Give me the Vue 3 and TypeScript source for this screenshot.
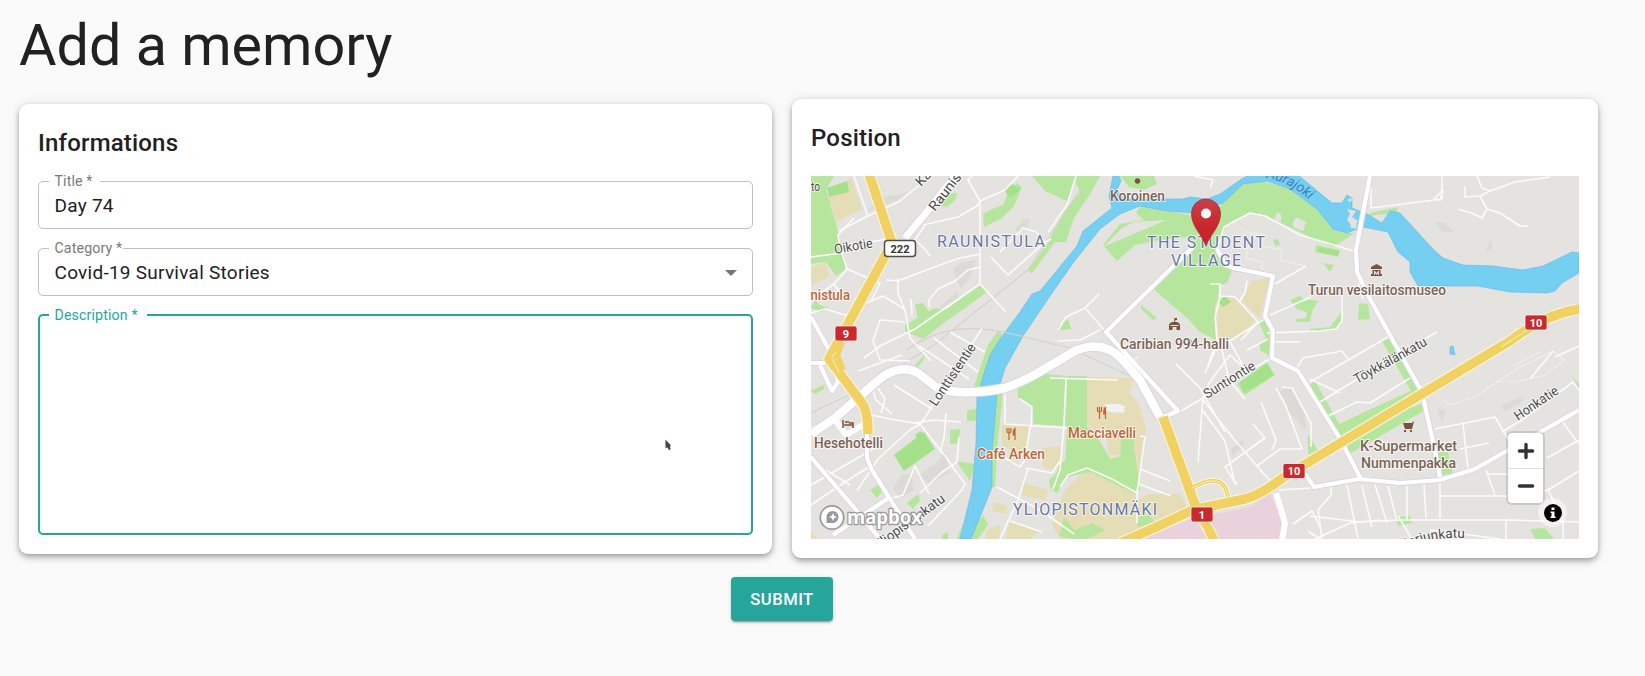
<script setup lang="ts">
import { ref } from 'vue'

interface Label {
  text: string
  x: number
  y: number
  width: number
  kind: string
  rotate?: number
}

const title = ref('Day 74')
const category = ref('Covid-19 Survival Stories')
const description = ref('')

const parks: string[] = [
  'M811 176H834L826 190L835 220L845 260V270L836 276L826 262L811 264Z',
  'M815 300L820 305L828 308L821 312L811 308Z',
  'M940 206L947 194L957 193L956 199L947 207Z',
  'M1032 176H1078L1067 201L1045 191Z',
  'M1073 176H1100L1090 194L1074 218L1066 242L1055 242L1032 273L1028 270L1048 243L1064 212L1080 192Z',
  'M983 214L990 210L1003 205L1007 195L1017 183L1022 187L1014 206L1002 218L984 227Z',
  'M1120 176H1154L1157 184L1144 190L1129 187Z',
  'M940 314L980 285L987 292L950 319H940Z',
  'M915 304L923 303L933 318L925 330L919 325Z',
  'M905 325L935 308L958 312L931 333L923 339L905 331Z',
  'M1103 247L1122 228L1134 222L1165 220L1193 226L1200 247L1151 287L1181 311L1200 332L1216 340L1215 309L1220 285L1227 283L1233 268L1226 265L1217 249L1222 232L1230 222L1248 214L1265 215L1310 237L1333 247L1355 233L1345 233L1333 229L1317 209L1290 189L1262 181L1241 185L1218 208L1196 216L1140 206L1136 213L1144 220L1120 224L1103 245L1117 261L1135 245L1160 240L1190 237L1193 247L1151 287L1195 325L1206 334L1213 220L1180 214Z',
  'M1137 298L1143 293L1146 296L1139 302Z',
  'M1141 305L1157 318L1153 320L1141 309Z',
  'M1057 327L1068 319L1071 329L1062 330Z',
  'M1370 213L1398 207L1397 213L1368 216Z',
  'M1316 245L1340 250L1338 257L1315 252Z',
  'M1273 240L1278 239L1280 244L1276 247Z',
  'M1323 263L1334 265L1330 272Z',
  'M1290 300L1300 296L1304 299L1318 301L1312 311L1310 322H1297L1296 319L1306 318L1307 312L1297 309Z',
  'M1310 329L1330 327L1341 312L1341 325L1331 331L1310 331Z',
  'M1359 303L1368 304L1370 319L1358 320Z',
  'M1258 321L1265 318L1269 329L1270 343L1269 356L1260 350L1260 343L1266 338Z',
  'M1237 384L1267 362L1275 375L1245 395Z',
  'M1382 341L1392 338L1410 371L1415 385L1421 395L1338 438L1333 427L1373 408L1411 391Z',
  'M1310 384L1315 381L1342 429L1425 403V410L1348 455L1338 438L1323 414Z',
  'M1308 434L1318 451L1308 455Z',
  'M1438 452H1448L1453 474L1440 475Z',
  'M1395 517L1410 516L1412 523L1398 526Z',
  'M1530 529L1545 528L1554 539H1535Z',
  'M1572 377L1579 384V389Z',
  'M998 331L1002 334L985 378L978 431L974 478L982 460L973 500L957 539H963L978 490L981 399L974 386L988 345Z',
  'M997 391H1003L998 440L995 487L988 487Z',
  'M967 411L978 408L976 421H967Z',
  'M950 430L960 429L959 443L950 444Z',
  'M956 461L975 464L970 481Z',
  'M811 391L825 384L824 389L815 394Z',
  'M907 503L918 494L920 501L914 507V510Z',
  'M870 490L880 484L882 492L877 498Z',
  'M942 535L948 532V539H942Z',
  'M975 526L983 515L988 525L978 539H970Z',
  'M915 365L925 354L924 359L917 368Z',
  'M1017 386L1036 373L1066 376L1067 426L1034 424L1031 407L1018 397Z',
  'M1067 376H1087V427L1094 431L1110 459L1135 452L1140 491L1130 485L1091 469L1070 475L1050 489L1049 480L1065 465L1067 427Z',
  'M1121 438H1134L1133 471L1120 466Z',
  'M1050 488L1061 462L1088 457H1110L1113 472L1138 480L1135 494L1090 472L1067 477L1057 493Z',
  'M1059 536L1064 517L1075 530L1092 523L1105 530L1087 539H1074Z',
  'M1137 517L1150 515L1154 523L1138 527Z',
]

const pitches: string[] = [
  'M827 188L847 181L849 192L829 197Z',
  'M1004 190L1012 184L1021 189L1010 198Z',
  'M894 455L924 432L935 449L904 471Z',
  'M915 435L921 431L923 434L917 438Z',
  'M1218 302L1225 296L1231 302L1223 307Z',
  'M1319 247L1339 251L1338 256L1318 252Z',
  'M1240 382L1267 364L1274 375L1243 393Z',
]

const sands: string[] = [
  'M826 199L851 177L862 209L836 222L831 204Z',
  'M811 268L825 262L830 276L812 285Z',
  'M1217 297L1234 296L1256 319L1242 337L1218 339Z',
  'M1242 301L1251 281L1270 277L1260 318Z',
  'M1002 423L1028 425V452L1017 454L1002 445Z',
  'M1043 448L1060 446L1062 470L1043 468Z',
  'M1023 483L1048 490L1045 500L1022 495Z',
  'M993 502L1008 506L1006 514L992 511Z',
  'M1050 380L1067 375L1068 391L1052 388Z',
  'M1087 377L1134 378L1129 393L1138 402L1146 430L1136 500L1149 494L1180 494L1188 510L1124 539H1060L1052 525L1065 490L1087 469L1111 478L1136 490L1137 455L1109 455L1107 440L1087 424Z',
  'M988 529L1000 525L1000 539H985Z',
  'M1010 521L1040 532L1030 539H1005Z',
  'M811 530L818 539H811Z',
]

const terrain: string[] = [
  'M867 212L882 197L907 193L896 201L878 207Z',
  'M1015 229L1023 221L1029 217L1028 227L1019 233Z',
  'M940 306L958 291V300L948 306L941 313Z',
  'M953 269L960 263L976 260L970 278L961 289L957 281Z',
  'M893 489L901 475L910 474L914 490L900 498Z',
  'M936 463L945 452L949 473L929 484L918 476Z',
  'M1276 392L1290 387L1304 409L1306 430L1291 415L1283 398Z',
  'M1435 222L1445 223L1454 232L1443 232Z',
  'M1487 247L1492 240L1492 248L1486 252Z',
  'M1500 406L1525 395L1520 404L1504 411Z',
  'M1231 449L1244 439L1242 448L1232 456Z',
  'M1438 410L1445 409L1443 422L1439 418Z',
]

const minorRoads: string[] = [
  'M811 257L842 253L860 244L887 239',
  'M854 176L868 217M854 218L838 235L840 247L847 269L880 283L871 301',
  'M839 231L870 215L900 201L930 176M847 269L834 284L811 300M834 284L845 300',
  'M811 313L825 309L845 315L853 320',
  'M923 225L958 217L977 206L980 201L968 180L972 176M980 201V284L1006 312',
  'M980 201L1005 190L1018 176M925 225L915 240L925 249L930 256',
  'M980 254L960 258L937 266L898 281L886 280M980 267L968 270L955 281L938 289L929 300V307',
  'M991 257L1008 275L1045 242L1051 239M1000 252L1023 228L1036 232L1046 244',
  'M898 278L898 293L905 310L910 338L931 361M867 303L883 296L906 310M911 299L912 315',
  'M980 284L915 329L880 346L864 358M905 322L880 320L873 341L880 360L910 361',
  'M902 355L858 371',
  'M919 346L969 379M934 338L978 372M950 332L985 352M982 328L960 363L920 425M894 385L932 409',
  'M872 415L890 419L920 424L945 456L965 484L962 490L928 526M920 424L910 430L878 459L857 491M913 423L934 420L961 422',
  'M946 413L944 438L940 452M959 437L957 462L941 473L920 493',
  'M878 388L885 399L881 413M872 388L876 400L892 414',
  'M811 461L850 485M811 485L880 445M811 505L845 482L872 465M886 500L903 495L915 466L922 480L929 494',
  'M1058 330L1066 317L1085 308L1099 294M1085 308L1107 333M1058 341L1080 340L1100 330',
  'M1194 176L1213 180L1210 188M1076 176L1067 205L1048 232',
  'M1217 249L1224 227L1250 213L1265 216L1300 235L1354 251',
  'M1210 284H1220V298L1215 317L1217 340L1208 366M1220 296L1235 297L1258 322M1247 281L1245 293L1239 302',
  'M1266 318L1233 339L1215 351L1205 373M1258 322L1241 340M1270 315L1311 297M1275 284L1306 266',
  'M1267 333L1320 331L1336 329L1342 321V295M1247 350L1268 339M1275 342H1300',
  'M1295 371L1303 358L1342 351L1348 359M1310 382L1388 337M1320 402L1388 360L1437 332M1328 416L1357 402L1370 403L1410 378',
  'M1363 299L1359 290V278M1371 188V208L1442 199V176M1434 199L1443 190L1440 201',
  'M1477 176L1482 188L1490 191L1480 196L1465 197V186M1490 191L1515 182L1550 177M1480 196L1487 209L1500 213L1520 226H1528M1487 209L1482 218L1474 214L1458 209',
  'M1229 340L1245 369L1230 355L1209 383L1203 398M1203 398L1198 462M1203 400L1237 443L1257 466L1273 484',
  'M1203 411L1225 441L1235 484M1257 466L1280 449H1302L1285 404L1276 388M1253 424L1265 438L1225 467L1237 485',
  'M1282 387L1292 388L1311 423V447M1222 350L1229 380L1245 399M1181 411L1240 376L1275 356',
  'M1137 357L1128 367M1176 364L1200 388L1225 432M1261 402L1276 440L1272 450',
  'M1140 469L1170 481M1139 484L1171 496M1140 436L1145 437L1137 493M1050 378L1118 380',
  'M1066 378L1064 425L1060 470L1053 489M1005 393V424L1067 428M1020 399L1032 407L1031 428M1030 428L1025 460L1020 467L1000 455M1026 468L1052 473L1060 461',
  'M1028 469L1018 500L1000 539M997 487L1040 510L1074 534M1010 521L1042 532M1060 487L1068 475L1087 468L1112 479L1137 493L1137 523',
  'M1340 393L1310 379M1553 351L1530 379M1555 357L1579 346',
  'M1502 432L1525 418L1573 382L1579 390M1435 429L1495 417L1508 439L1514 453M1463 424L1468 469M1460 449L1489 443',
  'M1486 470L1495 495M1487 474H1515M1440 496H1515L1548 490L1579 471M1562 421L1579 444M1547 458L1579 440M1548 490L1563 520V539',
  'M1347 485L1358 539M1362 486L1372 527M1375 485L1387 523M1388 486L1397 521M1407 486V519M1424 485L1426 518M1440 480V518',
  'M1310 516L1360 522L1400 520L1506 520L1579 522M1506 520V539M1380 520L1350 523L1315 539M1331 484V495L1318 510L1322 539M1398 516L1412 539',
  'M1293 524L1312 511L1320 527M1279 490L1310 488M1430 530L1470 535L1500 539M1308 531L1320 539',
]

const paths: string[] = [
  'M1245 238V232L1265 235L1262 246L1282 250L1280 260L1296 264L1306 266M1250 240L1246 258L1262 262V270',
  'M1443 400L1450 405L1475 397L1500 380L1520 367L1553 351L1565 360L1545 375L1515 382L1497 382M1515 365L1540 352',
]

const routes: string[] = [
  'M811 317L832 355L838 382L832 391L820 365M811 363H827M811 429L833 418L857 400',
  'M1193 247L1106 332L1116 343',
  'M1217 249L1226 265L1234 268L1273 276L1265 316L1273 331L1272 358L1298 371L1340 439L1361 479',
  'M1370 176L1356 250L1357 272L1369 297L1391 337L1422 392L1433 442L1440 477',
  'M1304 472L1314 487L1359 479L1400 483L1440 480L1475 469L1510 449L1579 410',
  'M811 457L857 511L880 539M867 430V458L872 470L915 539M890 497L833 535',
]

const labels: Label[] = [
  { text: 'to', x: 811, y: 191, width: 9, kind: 'street' },
  { text: 'Oikotie', x: 835, y: 254, width: 39, kind: 'street', rotate: -10 },
  { text: 'Ka', x: 921, y: 187, width: 16, kind: 'street', rotate: -46 },
  { text: 'Raunis', x: 935, y: 212, width: 44, kind: 'street', rotate: -52 },
  { text: 'Lonttistentie', x: 936, y: 407, width: 72, kind: 'street', rotate: -56 },
  { text: 'Suntiontie', x: 1207, y: 399, width: 58, kind: 'street', rotate: -32 },
  { text: 'Töykkälänkatu', x: 1357, y: 384, width: 81, kind: 'street', rotate: -29 },
  { text: 'Honkatie', x: 1518, y: 421, width: 50, kind: 'street', rotate: -34 },
  { text: 'Yliopistonkatu', x: 878, y: 550, width: 84, kind: 'street', rotate: -36 },
  { text: 'Raunistula', x: 788, y: 300, width: 62, kind: 'food' },
  { text: 'RAUNISTULA', x: 937, y: 246.5, width: 108, kind: 'district' },
  { text: 'THE STUDENT', x: 1147, y: 247.5, width: 118, kind: 'district' },
  { text: 'VILLAGE', x: 1171, y: 266, width: 70, kind: 'district' },
  { text: 'YLIOPISTONMÄKI', x: 1013, y: 515, width: 144, kind: 'district' },
  { text: 'Koroinen', x: 1110, y: 200.5, width: 55, kind: 'place' },
  { text: 'Caribian 994-halli', x: 1120, y: 349, width: 109, kind: 'place' },
  { text: 'Turun vesilaitosmuseo', x: 1308, y: 295, width: 138, kind: 'place' },
  { text: 'Hesehotelli', x: 814, y: 448, width: 69, kind: 'place' },
  { text: 'K-Supermarket', x: 1360, y: 451, width: 97, kind: 'place' },
  { text: 'Nummenpakka', x: 1361, y: 468, width: 95, kind: 'place' },
  { text: 'Café Arken', x: 977, y: 458.5, width: 68, kind: 'food' },
  { text: 'Macciavelli', x: 1068, y: 437.5, width: 68, kind: 'food' },
]

const shields = [
  { text: '9', x: 835, y: 326 },
  { text: '10', x: 1525, y: 315 },
  { text: '10', x: 1283, y: 463.5 },
  { text: '1', x: 1191, y: 507 },
]
</script>

<template>
  <main class="page">
    <h1>Add a memory</h1>
    <form class="form" @submit.prevent>
      <div class="cards">
        <section class="card info">
          <h2>Informations</h2>
          <fieldset class="field">
            <legend class="w-title"><span>Title *</span></legend>
            <input v-model="title" aria-label="Title" />
          </fieldset>
          <fieldset class="field">
            <legend class="w-category"><span>Category *</span></legend>
            <div class="select">
              <span>{{ category }}</span>
              <svg class="arrow" viewBox="0 0 12 6"><path d="M0 0H12L6 6Z" /></svg>
            </div>
          </fieldset>
          <fieldset class="field active">
            <legend class="w-description"><span>Description *</span></legend>
            <textarea v-model="description" aria-label="Description"></textarea>
          </fieldset>
          <svg class="cursor" viewBox="0 0 7 12"><path d="M.5 .5L6 6.5L5 7.5L5.7 10.5L3.8 11L2.6 8.5L.5 9Z" /></svg>
        </section>

        <section class="card position">
          <h2>Position</h2>
          <div class="map">
            <svg class="canvas" viewBox="811 176 768 363" width="768" height="363">
              <path v-for="d in terrain" :key="d" :d="d" class="terrain" />
              <path v-for="d in sands" :key="d" :d="d" class="sand" />
              <path v-for="d in parks" :key="d" :d="d" class="park" />
              <path v-for="d in pitches" :key="d" :d="d" class="pitch" />
              <path class="campus" d="M1133 539L1195 518L1250 507L1270 493L1281 520L1283 539Z" />
              <path class="island" d="M1293 222L1296 217L1306 222L1303 231L1293 227ZM1275 220Q1276 209 1281 214V222Z" />
              <path class="building" d="M1105 404H1118L1125 406L1124 413L1112 412L1105 411Z" />
              <path
                class="water"
                d="M960 539L972 490L976 443L977 397L982 380L990 355L1000 339L1020 312L1032 294L1040 291L1077 246L1083 231L1112 208L1109 196L1113 176H1119L1121 181L1117 190L1122 198L1137 199H1183L1190 197L1207 199L1220 194L1243 178L1250 175H1298L1332 203H1342L1347 195L1352 198V208L1367 214L1382 223L1390 211L1400 213L1433 249L1443 258L1463 265L1493 266L1523 270L1543 266L1572 252L1579 253V273L1562 283L1555 291L1547 293L1510 292L1477 286H1418L1410 272V262L1398 252L1388 232L1363 227L1347 233L1333 229L1317 209L1290 189L1267 181L1243 184L1223 203L1193 213L1167 211L1140 206L1120 214L1100 229L1073 263L1050 296L1023 336L1005 368L997 395L995 417L992 453V487L980 517L971 539Z"
              />
              <path class="island" d="M1347 209L1356 211L1352 217L1358 221L1352 226L1347 220L1350 214ZM1352 223L1357 222L1356 229L1350 227ZM1347 200L1352 198L1351 202Z" />
              <path class="water" d="M1450 347L1453 346L1455 355L1450 354ZM1189 338L1193 342L1190 344Z" />
              <path class="rail" d="M811 413L870 385L935 344L1028 270L1080 190M906 350C940 327 970 324 1012 334L1070 348L1130 376" />

              <path v-for="d in paths" :key="d" :d="d" class="footpath" />
              <path v-for="d in minorRoads" :key="d" :d="d" class="minor" />
              <path v-for="d in routes" :key="'c' + d" :d="d" class="route case" />
              <path class="route case" d="M1116 343L1178 411L1164 417M1276 493L1285 523L1282 540" />
              <path v-for="d in routes" :key="d" :d="d" class="route" />
              <path class="trunk case" d="M811 434L835 418L875 383Q898 362 918 373L936 387Q960 397 1005 388Q1022 382 1036 374L1075 351Q1102 339 1122 359L1140 380L1160 417" />
              <path class="trunk" d="M811 434L835 418L875 383Q898 362 918 373L936 387Q960 397 1005 388Q1022 382 1036 374L1075 351Q1102 339 1122 359L1140 380L1160 417" />
              <path class="route wide" d="M836 421L846 435L866 423" />
              <path class="route" d="M1116 343L1178 411L1164 417" />
              <path class="route wide" d="M1276 493L1285 523L1282 540" />
              <path class="ramp case" d="M975 150L930 208L905 238" />
              <path class="ramp" d="M975 150L930 208L905 238" />

              <g class="highway-case">
                <path d="M869 174L892 243L829 359L862 403Q868 411 868 434" />
                <path d="M1120 543L1152 529L1193 510L1245 499Q1262 494 1284 477L1415 398L1510 341Q1545 314 1580 309" />
                <path d="M1163 417L1194 502L1214 540" />
                <path class="loop" d="M1192 488Q1224 470 1228 497" />
              </g>
              <g class="highway">
                <path d="M869 174L892 243L829 359L862 403Q868 411 868 434" />
                <path d="M1120 543L1152 529L1193 510L1245 499Q1262 494 1284 477L1415 398L1510 341Q1545 314 1580 309" />
                <path d="M1163 417L1194 502L1214 540" />
                <path class="loop" d="M1192 488Q1224 470 1228 497" />
                <path class="slip" d="M842 342L837 355L843 370" />
              </g>
              <path class="median" d="M832 359L839 372M832 357L836 352M1501 347L1543 320M1198 520L1205 532M1192 488Q1224 470 1228 497" />

              <g class="icons">
                <circle cx="1137.5" cy="181" r="2.700" />
                <path d="M843 420V428M844 425H853V428M845 422H849M849 423H853V425" class="bed" />
                <path d="M1174.300 318H1177V320H1175.300V322C1179 322 1180 324 1180 325.500V330H1176.500V327H1172.500V330H1169V325.500C1169 324 1170 322 1174.300 322ZM1170.500 325V326H1178.500V325Z" fill-rule="evenodd" />
                <path d="M1371 267L1376.500 264L1382 267V269H1371ZM1372.500 270H1380.500V274H1382V276H1371V274H1372.500ZM1374 275V271H1375L1376.500 273L1378 271H1379V275H1378V273L1376.500 275L1375 273V275Z" fill-rule="evenodd" />
                <path d="M1403 423H1412L1413 421.500H1414L1412 429H1405ZM1404 430H1406V432H1404ZM1410 430H1412V432H1410Z" />
              </g>
              <g class="cutlery">
                <path d="M1007 428V431.500Q1007 433 1009 433Q1011 433 1011 431.500V428M1009 428V440" />
                <path d="M1015 440V428.500Q1013 430 1013.200 435H1015" class="knife" />
                <path d="M1097.500 407V410.500Q1097.500 412 1099.500 412Q1101.500 412 1101.500 410.500V407M1099.500 407V419" />
                <path d="M1105.500 419V407.500Q1103.500 409 1103.700 414H1105.500" class="knife" />
              </g>

              <path id="river-name" d="M1266 178Q1288 181 1312 202" fill="none" />
              <text class="river"><textPath href="#river-name">Aurajoki</textPath></text>
              <path id="lower-street" d="M1402 550Q1430 536 1466 538" fill="none" />
              <text class="street"><textPath href="#lower-street">Karjunkatu</textPath></text>
              <text
                v-for="label in labels"
                :key="label.text"
                :x="label.x"
                :y="label.y"
                :textLength="label.width"
                :lengthAdjust="label.kind === 'district' ? 'spacing' : 'spacingAndGlyphs'"
                :class="label.kind"
                :transform="label.rotate ? `rotate(${label.rotate} ${label.x} ${label.y})` : undefined"
              >{{ label.text }}</text>

              <rect class="plate" x="884.500" y="240.500" width="31" height="16" rx="3" />
              <text class="plate-text" x="900" y="253">222</text>
              <g v-for="(s, i) in shields" :key="i">
                <rect class="shield" :x="s.x" :y="s.y" width="22" height="15" rx="2" />
                <text class="shield-text" :x="s.x + 11" :y="s.y + 11.500">{{ s.text }}</text>
              </g>

              <defs>
                <linearGradient id="pin" x1="0" y1="0" x2="0" y2="1">
                  <stop offset="0" stop-color="#cc3f48" />
                  <stop offset=".6" stop-color="#c9272d" />
                  <stop offset="1" stop-color="#cd2027" />
                </linearGradient>
              </defs>
              <path class="pin" d="M1206 246C1202 234 1191.500 227 1191.500 213.500A14.500 14.500 0 0 1 1220.500 213.500C1220.500 227 1210 234 1206 246Z" />
              <circle cx="1206" cy="213.500" r="5" fill="#fff" />

              <g class="brand">
                <circle cx="832" cy="517.500" r="11.700" />
                <path d="M826.500 523V517A6 6 0 1 1 833 523Z" class="brand-mark" />
                <path d="M833 513L834.200 515.800L837 517L834.200 518.200L833 521L831.800 518.200L829 517L831.800 515.800Z" class="brand-star" />
                <text x="847" y="524" textLength="75" lengthAdjust="spacingAndGlyphs">mapbox</text>
              </g>
            </svg>
            <div class="zoom">
              <button type="button" aria-label="Zoom in"><svg viewBox="0 0 15 15"><path d="M7.500 2V13M2 7.500H13" /></svg></button>
              <button type="button" aria-label="Zoom out"><svg viewBox="0 0 15 15"><path d="M2 7.500H13" /></svg></button>
            </div>
            <div class="attribution">
              <svg viewBox="0 0 18 18"><circle cx="9" cy="9" r="9" /><path d="M7.500 3.500H10.500V6H7.500ZM6.500 7.500H10.500V12.500H11.500V14H6.500V12.500H7.500V9H6.500Z" /></svg>
            </div>
          </div>
        </section>
      </div>
      <button class="submit" type="submit">Submit</button>
    </form>
  </main>
</template>

<style>
body {
  background: #fafafa;
}
</style>

<style scoped>
* {
  box-sizing: border-box;
}
.page {
  height: 676px;
  padding: 11px 46px 0 19px;
  font-family: Roboto, "Liberation Sans", sans-serif;
  color: #212121;
  overflow: hidden;
}
h1 {
  margin: 0;
  font-size: 57.500px;
  line-height: 70px;
  font-weight: 400;
}
.form {
  display: flex;
  flex-direction: column;
  padding-top: 18px;
}
.cards {
  display: flex;
  align-items: center;
  gap: 20px;
}
.card {
  position: relative;
  background: #fff;
  border-radius: 9px;
  padding: 19px;
  box-shadow: 0 2px 5px -1px rgba(0, 0, 0, .22), 0 4px 6px rgba(0, 0, 0, .16), 0 1px 12px rgba(0, 0, 0, .13);
}
.info {
  width: 753px;
  height: 450px;
}
.position {
  width: 806px;
  height: 459px;
}
h2 {
  margin: 0;
  height: 51px;
  font-size: 24px;
  line-height: 40px;
  font-weight: 500;
  letter-spacing: .18px;
}
.position h2 {
  height: 58px;
}
.field {
  position: relative;
  width: 715px;
  height: 55px;
  margin: 0 0 12px;
  padding: 0 15.500px;
  border: 1px solid #c0c0c0;
  border-radius: 5px;
}
.field legend {
  height: 15px;
  margin-left: -6px;
  padding: 0 0 0 6px;
  font-size: 14.200px;
  line-height: 15px;
  letter-spacing: .13px;
  color: #7a7a7a;
  white-space: nowrap;
}
.w-title {
  width: 51px;
}
.w-category {
  width: 74px;
}
.w-description {
  width: 98px;
}
.field input,
.select {
  display: flex;
  width: 100%;
  height: 34px;
  padding: 0;
  border: 0;
  outline: 0;
  background: none;
  color: #212121;
  font: 400 19px/34px Roboto, "Liberation Sans", sans-serif;
  letter-spacing: .26px;
}
.select {
  justify-content: space-between;
  align-items: center;
}
.arrow {
  width: 12px;
  height: 6px;
  fill: #757575;
}
.field.active {
  height: 227px;
  margin: 0;
  border: 2px solid #26a69a;
}
.field.active legend {
  margin-left: -7px;
  color: #26a69a;
}
textarea {
  display: block;
  width: 100%;
  height: 190px;
  border: 0;
  outline: 0;
  resize: none;
  background: none;
}
.cursor {
  position: absolute;
  left: 646px;
  top: 335px;
  width: 7px;
  height: 12px;
  fill: #444;
}
.map {
  position: relative;
  width: 768px;
  height: 363px;
  background: #e5e3e0;
  overflow: hidden;
}
.canvas {
  display: block;
}
.terrain {
  fill: #dcdad5;
}
.sand {
  fill: #e5ddb6;
}
.park {
  fill: #b6e69e;
}
.pitch {
  fill: #a5e08a;
}
.campus {
  fill: #ead2dc;
}
.building {
  fill: #f0f0f5;
}
.water {
  fill: #75cff0;
  stroke: #67b5eb;
  stroke-width: .6;
}
.island {
  fill: #e5e3e0;
}
.rail {
  fill: none;
  stroke: #d5d2cc;
  stroke-width: 1.200;
}
.footpath {
  fill: none;
  stroke: #efeeec;
  stroke-width: 1.200;
}
.minor {
  fill: none;
  stroke: #fbfbfb;
  stroke-width: 1.600;
  stroke-linejoin: round;
}
.route,
.trunk,
.ramp {
  fill: none;
  stroke: #fff;
  stroke-width: 4.200;
  stroke-linejoin: round;
}
.route.wide {
  stroke-width: 6;
}
.trunk {
  stroke-width: 8.500;
}
.ramp {
  stroke-width: 7;
}
.case {
  stroke: #d7d6e4;
  stroke-width: 6;
}
.trunk.case {
  stroke-width: 10.500;
}
.ramp.case {
  stroke-width: 9;
}
.highway path,
.highway-case path {
  fill: none;
  stroke: #f1d162;
  stroke-width: 9.500;
  stroke-linejoin: round;
}
.highway-case path {
  stroke: #fbf7e6;
  stroke-width: 11.500;
}
.highway .loop {
  stroke-width: 4;
}
.highway .slip {
  stroke-width: 6;
}
.highway-case .loop {
  stroke-width: 6;
}
.median {
  fill: none;
  stroke: #f9efc8;
  stroke-width: 1;
}
.icons {
  fill: #78543f;
}
.bed {
  fill: none;
  stroke: #78543f;
  stroke-width: 1.500;
}
.cutlery path {
  fill: none;
  stroke: #bf6633;
  stroke-width: 1.200;
}
.cutlery .knife {
  fill: #bf6633;
}
.canvas text {
  font-family: Roboto, "Liberation Sans", sans-serif;
  paint-order: stroke;
  stroke: rgba(255, 255, 255, .75);
  stroke-width: 2px;
  stroke-linejoin: round;
}
.canvas .street {
  font-size: 13.500px;
  fill: #4a4a4a;
}
.canvas .place {
  font-size: 14.500px;
  font-weight: 500;
  fill: #7c6353;
}
.canvas .food {
  font-size: 14.500px;
  font-weight: 500;
  fill: #c2653a;
}
.canvas .district {
  font-size: 16px;
  fill: #6876a4;
}
.canvas .river {
  font-size: 14px;
  font-style: italic;
  fill: #4280bd;
  stroke: none;
}
.plate {
  fill: #fff;
  stroke: #4d4d4d;
  stroke-width: 1.500;
}
.canvas .plate-text {
  font-size: 11px;
  font-weight: 700;
  text-anchor: middle;
  fill: #333;
  stroke: none;
}
.shield {
  fill: #ca2a2d;
  stroke: #fff;
  stroke-width: .7;
}
.canvas .shield-text {
  font-size: 11px;
  font-weight: 700;
  text-anchor: middle;
  fill: #fff;
  stroke: none;
}
.pin {
  fill: url(#pin);
  stroke: #a92c34;
  stroke-width: .8;
}
.brand circle {
  fill: #fff;
  stroke: #999;
  stroke-width: 1.700;
}
.brand-mark {
  fill: #999;
}
.brand-star {
  fill: #fff;
}
.canvas .brand text {
  font: 700 19px "Open Sans", sans-serif;
  fill: #fff;
  stroke: #999;
  stroke-width: 2.500px;
}
.zoom {
  position: absolute;
  right: 36px;
  bottom: 36px;
  width: 35px;
  height: 70px;
  border-radius: 4px;
  background: #fff;
  box-shadow: 0 0 0 2px rgba(0, 0, 0, .12);
}
.zoom button {
  display: flex;
  align-items: center;
  justify-content: center;
  width: 35px;
  height: 35px;
  padding: 0;
  border: 0;
  background: none;
}
.zoom button + button {
  border-top: 1px solid #ddd;
}
.zoom svg {
  width: 18px;
  height: 18px;
  fill: none;
  stroke: #333;
  stroke-width: 2.800;
  stroke-linecap: round;
}
.attribution {
  position: absolute;
  right: 12px;
  bottom: 12px;
  display: flex;
  align-items: center;
  justify-content: center;
  width: 29px;
  height: 29px;
  border-radius: 50%;
  background: rgba(255, 255, 255, .5);
}
.attribution svg {
  width: 18px;
  height: 18px;
}
.attribution path {
  fill: #fff;
}
.submit {
  align-self: flex-start;
  width: 102px;
  height: 44px;
  margin: 19px 0 0 712px;
  border: 0;
  border-radius: 4px;
  background: #26a69a;
  color: #fff;
  font: 500 16.600px Roboto, "Liberation Sans", sans-serif;
  letter-spacing: .5px;
  text-transform: uppercase;
  box-shadow: 0 3px 1px -2px rgba(0, 0, 0, .2), 0 2px 2px rgba(0, 0, 0, .14), 0 1px 5px rgba(0, 0, 0, .12);
}
</style>
